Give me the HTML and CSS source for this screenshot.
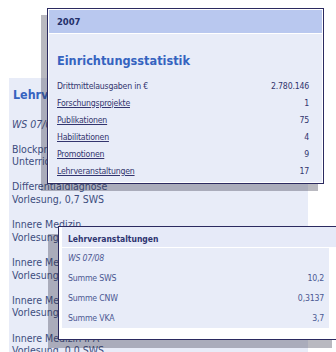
FILE: index.html
```html
<!DOCTYPE html>
<html lang="de">
<head>
    <meta charset="UTF-8">
    <meta name="viewport" content="width=device-width, initial-scale=1.0">
    <title>Einrichtungsstatistik</title>
    <link rel="stylesheet" href="styles.css">
</head>
<body>

<div class="panel">
    <h2 class="panel-title">Lehrveranstaltungen</h2>
    <p class="term">WS 07/08</p>
    <ul class="courses">
        <li>Blockpraktikum Innere Medizin<br>Unterricht am Krankenbett, 1,0 SWS</li>
        <li>Differentialdiagnose<br>Vorlesung, 0,7 SWS</li>
        <li>Innere Medizin<br>Vorlesung, 2,0 SWS</li>
        <li>Innere Medizin I<br>Vorlesung, 1,5 SWS</li>
        <li>Innere Medizin II<br>Vorlesung, 1,0 SWS</li>
        <li>Innere Medizin II A<br>Vorlesung, 0,0 SWS</li>
    </ul>
</div>

<div class="popup stats">
    <div class="stats-head">2007</div>
    <div class="stats-body">
        <h3 class="stats-title">Einrichtungsstatistik</h3>
        <div class="row"><span>Drittmittelausgaben in &euro;</span><span>2.780.146</span></div>
        <div class="row"><a href="#">Forschungsprojekte</a><span>1</span></div>
        <div class="row"><a href="#">Publikationen</a><span>75</span></div>
        <div class="row"><a href="#">Habilitationen</a><span>4</span></div>
        <div class="row"><a href="#">Promotionen</a><span>9</span></div>
        <div class="row"><a href="#">Lehrveranstaltungen</a><span>17</span></div>
    </div>
</div>

<div class="popup teaching">
    <div class="teaching-head">Lehrveranstaltungen</div>
    <div class="teaching-body">
        <div class="row term-row"><span>WS 07/08</span></div>
        <div class="row"><span>Summe SWS</span><span>10,2</span></div>
        <div class="row"><span>Summe CNW</span><span>0,3137</span></div>
        <div class="row"><span>Summe VKA</span><span>3,7</span></div>
    </div>
</div>

</body>
</html>
```

FILE: styles.css
```css
body {
    margin: 0;
    overflow: hidden;
    height: 352px;
    background-color: #fff;
    font-family: "DejaVu Sans Condensed", "DejaVu Sans", sans-serif;
    position: relative;
}

/* background panel */
.panel {
    margin: 78px 0 0 9px;
    width: 295px;
    height: 274px;
    padding: 9px 0 0 4px;
    background-color: #e8ecf8;
    color: #3d4c7e;
    font-size: 10.5px;
}

.panel-title {
    margin: 0;
    font-size: 12.4px;
    line-height: 16px;
    color: #3563c0;
}

.term {
    margin: 15px 0 0 -1px;
    line-height: 12.6px;
    font-style: italic;
}

.courses {
    list-style-type: none;
    margin: 12px 0 0 -1px;
    padding: 0;
    line-height: 12.6px;
    white-space: nowrap;
}

.courses li {
    margin-bottom: 12.6px;
}

/* popups */
.popup {
    position: absolute;
    background-color: #fff;
    border: 1px solid #2b2a60;
}

.row {
    display: flex;
    justify-content: space-between;
    align-items: center;
}

.stats {
    left: 47px;
    top: 8px;
    width: 273px;
    padding: 1px;
    box-shadow: -6px 7px 0 rgba(50, 50, 70, 0.34);
}

.stats-head {
    height: 23px;
    line-height: 23px;
    padding-left: 8px;
    margin-bottom: 1px;
    background-color: #b9c8ef;
    color: #24306a;
    font-size: 9.4px;
    font-weight: bold;
}

.stats-body {
    padding: 19px 13px 3px 8px;
    background-color: #e8ecf8;
    color: #33356e;
    font-size: 8.7px;
    letter-spacing: -0.2px;
}

.stats-title {
    margin: 0 0 8px;
    font-size: 12.6px;
    line-height: 16px;
    letter-spacing: 0;
    color: #3563c0;
}

.stats-body .row {
    height: 17px;
}

.stats-body a {
    color: #33356e;
}

.teaching {
    left: 58px;
    top: 226px;
    width: 279px;
    padding-left: 3px;
    box-shadow: -10px 8px 0 rgba(50, 50, 70, 0.34);
}

.teaching-head {
    height: 20px;
    line-height: 14px;
    padding: 5px 0 0 6px;
    box-sizing: border-box;
    margin-bottom: 1px;
    background-color: #e6eaf8;
    color: #2e3470;
    font-size: 8.5px;
    font-weight: bold;
}

.teaching-body {
    margin: 0 12px 11px 0;
    padding: 0 5px 0 6px;
    background-color: #e8ecf8;
    color: #4b5893;
    font-size: 8.7px;
    letter-spacing: -0.2px;
}

.teaching-body .row {
    height: 20px;
}

.term-row {
    font-style: italic;
}
```
